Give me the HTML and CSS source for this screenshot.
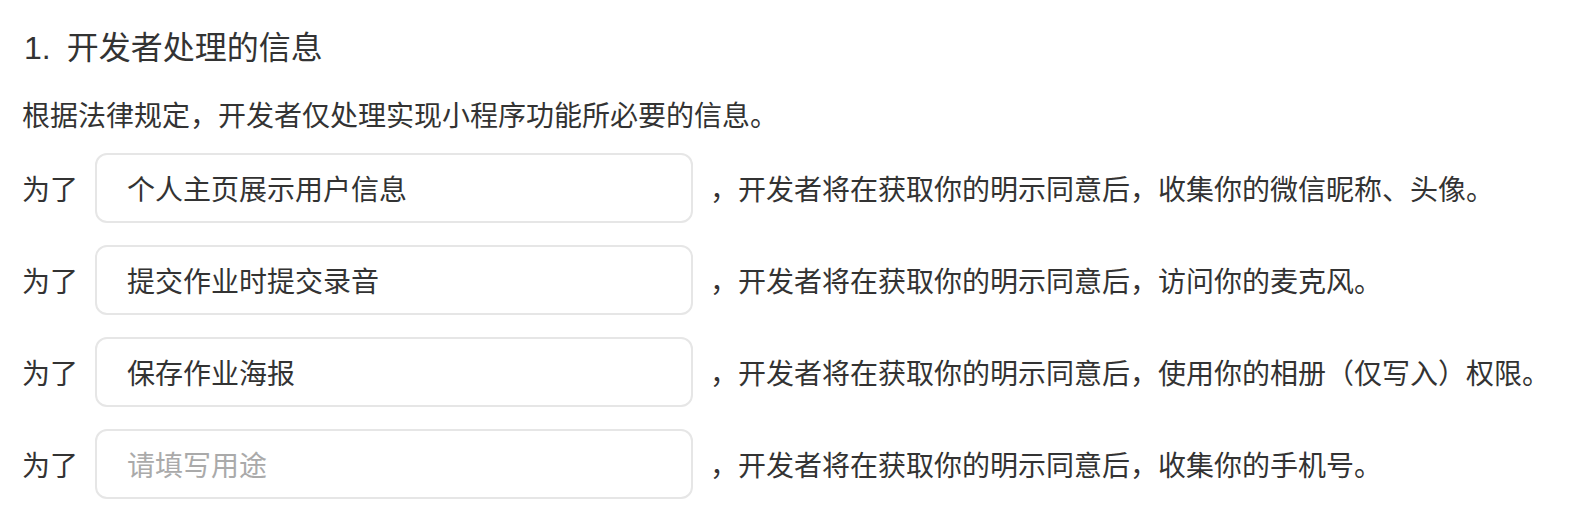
FILE: index.html
```html
<!DOCTYPE html>
<html lang="zh-CN">
<head>
<meta charset="utf-8">
<title>开发者处理的信息</title>
<link rel="stylesheet" href="styles.css">
</head>
<body>
<section class="section">
  <h2 class="title"><span class="num">1.</span>开发者处理的信息</h2>
  <p class="intro">根据法律规定，开发者仅处理实现小程序功能所必要的信息。</p>
  <div class="rows">
    <div class="row">
      <span class="label">为了</span>
      <input class="field" type="text" value="个人主页展示用户信息" placeholder="请填写用途">
      <span class="desc">，开发者将在获取你的明示同意后，收集你的微信昵称、头像。</span>
    </div>
    <div class="row">
      <span class="label">为了</span>
      <input class="field" type="text" value="提交作业时提交录音" placeholder="请填写用途">
      <span class="desc">，开发者将在获取你的明示同意后，访问你的麦克风。</span>
    </div>
    <div class="row">
      <span class="label">为了</span>
      <input class="field" type="text" value="保存作业海报" placeholder="请填写用途">
      <span class="desc">，开发者将在获取你的明示同意后，使用你的相册（仅写入）权限。</span>
    </div>
    <div class="row">
      <span class="label">为了</span>
      <input class="field" type="text" value="" placeholder="请填写用途">
      <span class="desc">，开发者将在获取你的明示同意后，收集你的手机号。</span>
    </div>
  </div>
</section>
</body>
</html>
```

FILE: styles.css
```css
html, body {
  margin: 0;
  padding: 0;
  background: #ffffff;
}

body {
  font-family: "Noto Sans CJK SC", "Noto Sans", "Liberation Sans", sans-serif;
  color: #333333;
}

.section {
  padding: 25px 22px 0 22px;
}

.title {
  margin: 0;
  font-size: 32px;
  font-weight: 400;
  line-height: 40px;
  height: 40px;
  color: #333333;
}

.num {
  display: inline-block;
  font-family: "Liberation Sans", "Noto Sans", sans-serif;
  margin-left: 2px;
  margin-right: 16px;
}

.intro {
  margin: 29px 0 0 0;
  font-size: 28px;
  line-height: 40px;
}

.rows {
  margin-top: 19px;
  display: flex;
  flex-direction: column;
  gap: 22px;
}

.row {
  display: flex;
  align-items: center;
  height: 70px;
  font-size: 28px;
}

.label {
  flex: none;
  line-height: 40px;
}

.field {
  flex: none;
  box-sizing: border-box;
  width: 598px;
  height: 70px;
  margin: 0 17px;
  padding: 0 30px;
  border: 2px solid #e6e6e6;
  border-radius: 12px;
  background: #ffffff;
  font-family: "Noto Sans CJK SC", "Noto Sans", sans-serif;
  font-size: 28px;
  color: #333333;
  outline: none;
}

.field::placeholder {
  color: #aaaaaa;
}

.desc {
  flex: none;
  line-height: 40px;
  white-space: nowrap;
}
```
